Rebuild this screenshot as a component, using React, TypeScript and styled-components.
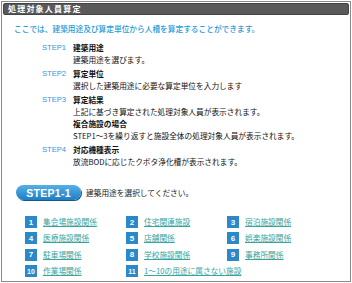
import styled, { createGlobalStyle } from 'styled-components';

const GlobalStyle = createGlobalStyle`
    html, body {
        margin: 0;
        padding: 0;
        background: #ffffff;
    }
    body {
        font-family: "Noto Sans CJK JP", "DejaVu Sans", sans-serif;
    }
`

const Panel = styled.div`
    box-sizing: border-box;
    width: 350px;
    height: 281px;
    margin: 1px 0 0 1px;
    border: 1px solid #8a8a8a;
    padding: 1px;
    overflow: hidden;
`

const TitleBar = styled.div`
    height: 10px;
    background: #595959;
    border: 1px solid #444;
    border-radius: 2px;
    color: #fff;
    font-size: 8px;
    font-weight: 700;
    line-height: 10px;
    padding-left: 4px;
    letter-spacing: 1.2px;
`

const Intro = styled.p`
    margin: 8px 0 0 11px;
    color: #2a9ad8;
    font-size: 7.7px;
    line-height: 12px;
    font-weight: 500;
`

const StepList = styled.div`
    margin: 7px 0 0 39px;
    display: flex;
    flex-direction: column;
    gap: 2px;
`

const StepRow = styled.div`
    display: grid;
    grid-template-columns: 31px 1fr;
`

const StepLabel = styled.span`
    color: #2f98d8;
    font-family: "Liberation Sans", Arial, sans-serif;
    font-size: 7.6px;
    line-height: 12px;
`

const StepBody = styled.div`
    display: flex;
    flex-direction: column;
`

type LineProps = {
    bold?: boolean
}
const Line = styled.span<LineProps>`
    display: block;
    color: #111;
    font-size: 7.7px;
    line-height: 12px;
    font-weight: ${({bold}) => bold ? 700 : 400};
`

const SelectHead = styled.div`
    margin: 17px 0 0 13px;
    height: 15px;
    display: flex;
    align-items: center;
    gap: 5px;
`

const Badge = styled.span`
    display: inline-flex;
    align-items: center;
    justify-content: center;
    width: 65px;
    height: 15px;
    border-radius: 8px;
    background: linear-gradient(#56b0e6, #1f7fc4);
    box-shadow: 1px 1px 0 #15598a;
    color: #fff;
    font-family: "Liberation Sans", Arial, sans-serif;
    font-weight: 700;
    font-size: 10.5px;
    letter-spacing: 0.3px;
`

const SelectText = styled.span`
    font-size: 7.7px;
    color: #222;
`

const UseGrid = styled.div`
    margin: 14px 0 0 22px;
    display: grid;
    grid-template-columns: 101px 101px 1fr;
    grid-auto-rows: 16.3px;
`

const UseItem = styled.div`
    display: flex;
    align-items: center;
    gap: 6px;
`

type NumBoxProps = {
    wide?: boolean
}
const NumBox = styled.span<NumBoxProps>`
    width: 12px;
    height: 12px;
    background: #2b88c9;
    color: #fff;
    font-family: "Liberation Sans", Arial, sans-serif;
    font-weight: 700;
    font-size: ${({wide}) => wide ? '7px' : '8px'};
    display: flex;
    align-items: center;
    justify-content: center;
    flex-shrink: 0;
`

const UseLink = styled.a`
    color: #35a5a0;
    font-size: 7.7px;
    line-height: 12px;
    text-decoration: underline;
    white-space: nowrap;
    cursor: pointer;
`

const steps = [
    { label: 'STEP1', lines: [{ t: '建築用途', b: true }, { t: '建築用途を選びます。' }] },
    { label: 'STEP2', lines: [{ t: '算定単位', b: true }, { t: '選択した建築用途に必要な算定単位を入力します' }] },
    {
        label: 'STEP3', lines: [
            { t: '算定結果', b: true },
            { t: '上記に基づき算定された処理対象人員が表示されます。' },
            { t: '複合施設の場合', b: true },
            { t: 'STEP1～3を繰り返すと施設全体の処理対象人員が表示されます。' },
        ]
    },
    { label: 'STEP4', lines: [{ t: '対応機種表示', b: true }, { t: '放流BODに応じたクボタ浄化槽が表示されます。' }] },
]

const uses = [
    '集会場施設関係', '住宅関連施設', '宿泊施設関係',
    '医療施設関係', '店舗関係', '娯楽施設関係',
    '駐車場関係', '学校施設関係', '事務所関係',
    '作業場関係', '1～10の用途に属さない施設',
]

const App = () => {
    return (
        <>
            <GlobalStyle />
            <Panel>
                <TitleBar>処理対象人員算定</TitleBar>
                <Intro>ここでは、建築用途及び算定単位から人槽を算定することができます。</Intro>
                <StepList>
                    {steps.map(s => (
                        <StepRow key={s.label}>
                            <StepLabel>{s.label}</StepLabel>
                            <StepBody>
                                {s.lines.map(l => <Line key={l.t} bold={l.b}>{l.t}</Line>)}
                            </StepBody>
                        </StepRow>
                    ))}
                </StepList>
                <SelectHead>
                    <Badge>STEP1-1</Badge>
                    <SelectText>建築用途を選択してください。</SelectText>
                </SelectHead>
                <UseGrid>
                    {uses.map((u, i) => (
                        <UseItem key={u} style={i === 10 ? { gridColumn: 'span 2' } : undefined}>
                            <NumBox wide={i >= 9}>{i + 1}</NumBox>
                            <UseLink>{u}</UseLink>
                        </UseItem>
                    ))}
                </UseGrid>
            </Panel>
        </>
    );
};

export default App;
